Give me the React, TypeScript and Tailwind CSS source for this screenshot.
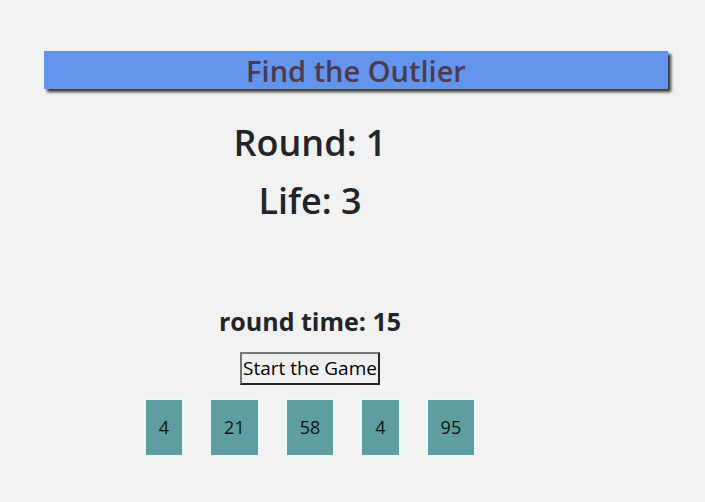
import React from 'react';

const App: React.FC = () => {
  const numbers = [4, 21, 58, 4, 95];

  return (
    <div className="min-h-[502px] w-full bg-[#f2f2f2] pt-[51px] font-['Open_Sans',sans-serif] text-[#212529]">
      <div className="ml-[44px] flex h-[38px] w-[624px] items-center justify-center bg-[#6495ed] shadow-[3px_3px_3px_#333]">
        <h1 className="text-[29px] font-semibold leading-none text-[#4d3a4f]">Find the Outlier</h1>
      </div>

      <div className="flex w-[620px] flex-col items-center">
        <h2 className="mt-[32px] h-[43px] text-[36px] font-semibold leading-[43px]">Round: 1</h2>
        <h2 className="mt-[15px] h-[43px] text-[36px] font-semibold leading-[43px]">Life: 3</h2>

        <h3 className="mt-[85px] h-[29px] text-[25px] font-bold leading-[29px]">round time: 15</h3>
        <button className="mt-[16px] h-[33px] w-[140px] border-2 border-t-[#767676] border-l-[#767676] border-r-[#222] border-b-[#222] bg-[#f0f0f0] text-[19px] leading-none text-black">
          Start the Game
        </button>

        <div className="mt-[13px] flex gap-[25px]">
          {numbers.map((n, i) => (
            <div
              key={i}
              className="flex h-[59px] items-center justify-center border-2 border-[#e8fafa] bg-[#5f9ea0] px-[13px] text-[18px] text-[#111]"
            >
              {n}
            </div>
          ))}
        </div>
      </div>
    </div>
  );
};

export default App;
